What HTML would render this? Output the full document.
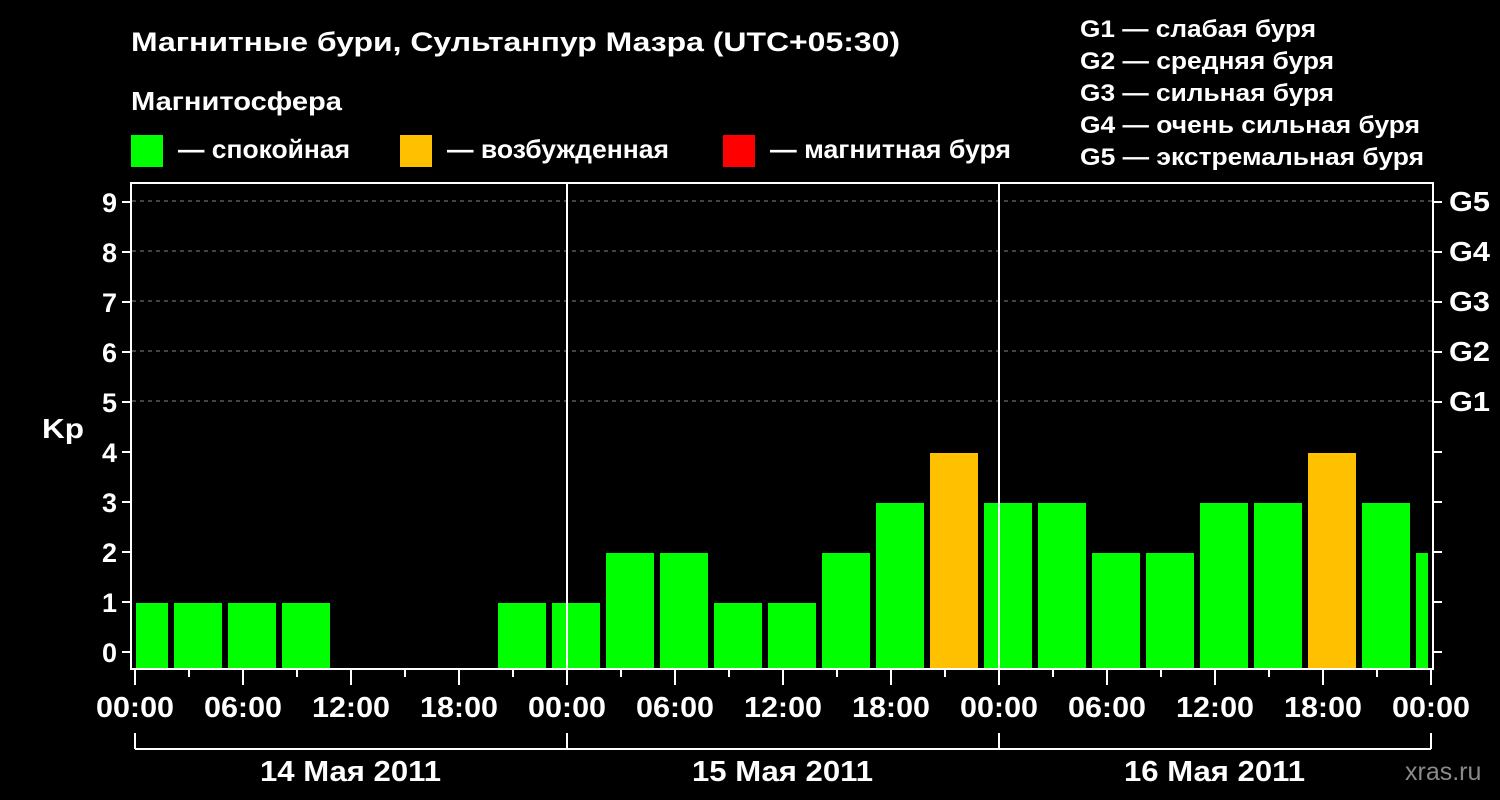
<!DOCTYPE html><html><head><meta charset="utf-8"><style>body{margin:0;background:#000}svg{display:block}text{font-family:"Liberation Sans",sans-serif;font-weight:bold;fill:#fff}</style></head><body>
<svg width="1500" height="800" viewBox="0 0 1500 800">
<rect width="1500" height="800" fill="#000"/>
<text x="131" y="51" font-size="27" textLength="769" lengthAdjust="spacingAndGlyphs">Магнитные бури, Сультанпур Мазра (UTC+05:30)</text>
<text x="131" y="110" font-size="26" textLength="211" lengthAdjust="spacingAndGlyphs">Магнитосфера</text>
<rect x="131" y="135" width="32" height="32" fill="#00ff00"/><text x="178" y="158" font-size="26" textLength="172" lengthAdjust="spacingAndGlyphs">— спокойная</text>
<rect x="400" y="135" width="32" height="32" fill="#ffc000"/><text x="447" y="158" font-size="26" textLength="222" lengthAdjust="spacingAndGlyphs">— возбужденная</text>
<rect x="723" y="135" width="32" height="32" fill="#ff0000"/><text x="770" y="158" font-size="26" textLength="241" lengthAdjust="spacingAndGlyphs">— магнитная буря</text>
<g font-size="24"><text x="1080" y="37" textLength="236" lengthAdjust="spacingAndGlyphs">G1 — слабая буря</text><text x="1080" y="69" textLength="254" lengthAdjust="spacingAndGlyphs">G2 — средняя буря</text><text x="1080" y="101" textLength="254" lengthAdjust="spacingAndGlyphs">G3 — сильная буря</text><text x="1080" y="133" textLength="340" lengthAdjust="spacingAndGlyphs">G4 — очень сильная буря</text><text x="1080" y="165" textLength="344" lengthAdjust="spacingAndGlyphs">G5 — экстремальная буря</text></g>
<g stroke="#888" stroke-dasharray="4,4" stroke-width="1">
<line x1="132" y1="201" x2="1432" y2="201"/><line x1="132" y1="251" x2="1432" y2="251"/><line x1="132" y1="301" x2="1432" y2="301"/><line x1="132" y1="351" x2="1432" y2="351"/><line x1="132" y1="401" x2="1432" y2="401"/></g>
<g id="bars"></g>
<g stroke="#fff" stroke-width="2" fill="none">
<rect x="131" y="183" width="1302" height="486"/>
<line x1="567" y1="183" x2="567" y2="669"/><line x1="999" y1="183" x2="999" y2="669"/>
<path d="M135 749H1431M135 733V749M567 733V749M999 733V749M1431 733V749"/>
<path id="ticks"/>
</g>
<g font-size="27" text-anchor="end" id="ylab"></g>
<text x="42" y="438" font-size="28" textLength="42" lengthAdjust="spacingAndGlyphs">Kp</text>
<g font-size="28"><text x="1449" y="211" textLength="41" lengthAdjust="spacingAndGlyphs">G5</text><text x="1449" y="261" textLength="41" lengthAdjust="spacingAndGlyphs">G4</text><text x="1449" y="311" textLength="41" lengthAdjust="spacingAndGlyphs">G3</text><text x="1449" y="361" textLength="41" lengthAdjust="spacingAndGlyphs">G2</text><text x="1449" y="411" textLength="41" lengthAdjust="spacingAndGlyphs">G1</text></g>
<g font-size="29" id="xlab"></g>
<g font-size="29"><text x="260" y="781" textLength="181" lengthAdjust="spacingAndGlyphs">14 Мая 2011</text><text x="692" y="781" textLength="181" lengthAdjust="spacingAndGlyphs">15 Мая 2011</text><text x="1124" y="781" textLength="181" lengthAdjust="spacingAndGlyphs">16 Мая 2011</text></g>
<text x="1405" y="780" font-size="25" style="fill:#8a8a8a;font-weight:normal">xras.ru</text>
</svg>
<script>
var ns="http://www.w3.org/2000/svg";
var v=[1,1,1,1,0,0,0,1,1,2,2,1,1,2,3,4,3,3,2,2,3,3,4,3,2];
var g=document.getElementById('bars');
v.forEach(function(k,i){if(!k)return;var x1=Math.max(136,120+54*i),x2=Math.min(1428,168+54*i);var r=document.createElementNS(ns,'rect');r.setAttribute('x',x1);r.setAttribute('width',x2-x1);var t=652-50*k+1;r.setAttribute('y',t);r.setAttribute('height',668-t);r.setAttribute('fill',k>=4?'#ffc000':'#00ff00');g.appendChild(r);});
var d='';for(var k=0;k<=9;k++){var y=652-50*k;d+='M122 '+y+'H131M1433 '+y+'H1442';var t=document.createElementNS(ns,'text');t.setAttribute('x',117);t.setAttribute('y',y+10);t.textContent=k;document.getElementById('ylab').appendChild(t);}
for(var i=0;i<=24;i++){var x=135+54*i;d+='M'+x+' 669V'+(i%2?677:685);}
document.getElementById('ticks').setAttribute('d',d);
var L=['00:00','06:00','12:00','18:00'];for(var i=0;i<=12;i++){var t=document.createElementNS(ns,'text');t.setAttribute('x',96+108*i);t.setAttribute('y',717);t.setAttribute('textLength',78);t.setAttribute('lengthAdjust','spacingAndGlyphs');t.textContent=L[i%4];document.getElementById('xlab').appendChild(t);}
</script>
</body></html>
